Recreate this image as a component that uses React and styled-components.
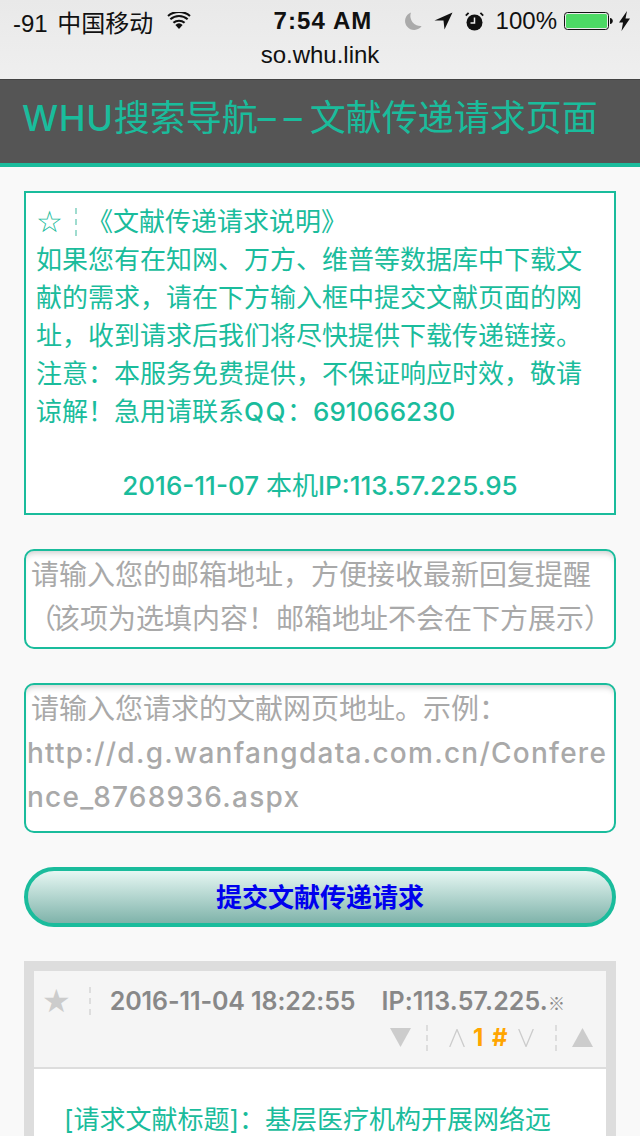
import React from "react";
import styled, { createGlobalStyle } from "styled-components";

const TEAL = "#1abc9c";
const CJK = '"Noto Sans CJK SC", sans-serif';
const LATIN = `Inter, ${CJK}`;

const GlobalStyle = createGlobalStyle`
  html, body {
    margin: 0;
    padding: 0;
    background: #f9f9f9;
  }
  * {
    box-sizing: border-box;
  }
`;

const Page = styled.div`
  width: 640px;
  height: 1136px;
  overflow: hidden;
  font-family: ${LATIN};
`;

const StatusArea = styled.div`
  height: 79px;
  background: linear-gradient(#e9e9e9, #efefef);
  font-family: "Liberation Sans", ${CJK};
  color: #111;
`;

const StatusBar = styled.div`
  height: 42px;
  display: grid;
  grid-template-columns: 1fr auto 1fr;
  align-items: center;
  padding: 0 10px 0 13px;
  font-size: 24px;
`;

const StatusLeft = styled.div`
  display: flex;
  align-items: center;
  gap: 14px;
  word-spacing: 3px;
`;

const Time = styled.div`
  margin-left: 3px;
  font-weight: 700;
  font-size: 24px;
  letter-spacing: 1.1px;
`;

const StatusRight = styled.div`
  display: flex;
  align-items: center;
  justify-content: flex-end;
  gap: 12px;
`;

const Percent = styled.span`
  margin: 0 -5px 0 0;
`;

const BatteryWrap = styled.span`
  display: flex;
  margin-right: -6px;
`;

const Domain = styled.div`
  text-align: center;
  font-size: 24px;
  line-height: 26px;
`;

const Header = styled.header`
  height: 88px;
  background: #555;
  border-top: 1px solid #444;
  border-bottom: 4px solid ${TEAL};
  padding: 16px 0 0 22px;
  color: ${TEAL};
  font-size: 36px;
  line-height: 44px;
  white-space: nowrap;
`;

const Latin = styled.span`
  font-weight: 500;
  letter-spacing: ${(p) => p.$spacing || 0}px;
`;

const Dashes = styled.span`
  letter-spacing: 8px;
`;

const Main = styled.main`
  padding: 24px 24px 0;
  display: flex;
  flex-direction: column;
  gap: 34px;
`;

const Notice = styled.section`
  height: 324px;
  background: #fff;
  border: 2px solid ${TEAL};
  padding: 10px;
  color: ${TEAL};
  font-size: 26px;
  line-height: 38px;
`;

const NoticeTitle = styled.div`
  display: flex;
  align-items: center;
`;

const Divider = styled.span`
  display: inline-block;
  flex: none;
  height: ${(p) => p.$height}px;
  margin: ${(p) => p.$margin};
  border-left: 2px dashed ${(p) => p.$color};
`;

const NoticeDate = styled.div`
  margin-top: 36px;
  text-align: center;
  font-weight: 500;
`;

const Thin = styled.span`
  font-weight: 400;
`;

const FieldWrap = styled.div`
  position: relative;
  height: ${(p) => p.$height}px;
`;

const Field = styled.textarea`
  display: block;
  width: 100%;
  height: 100%;
  resize: none;
  background: #fff;
  border: 2px solid ${TEAL};
  border-radius: 10px;
  box-shadow: inset 0 6px 6px -4px rgba(0, 0, 0, 0.2);
  overflow: hidden;
  outline: none;
`;

const Hint = styled.div`
  position: absolute;
  inset: 0;
  padding: 4px 2px 0 7px;
  pointer-events: none;
  color: #a9a9a9;
  font-size: 28px;
  line-height: 44px;
  white-space: nowrap;
`;

const HintLatin = styled.span`
  margin-left: -4px;
  font-weight: 500;
  letter-spacing: 1.25px;
`;

const OpenParen = styled.span`
  margin-left: -3px;
  letter-spacing: -4px;
`;

const SubmitButton = styled.button`
  height: 60px;
  width: 100%;
  border: 4px solid ${TEAL};
  border-radius: 30px;
  background: linear-gradient(#e6f7f3, #7fb3aa);
  color: #0000ee;
  font-family: ${CJK};
  font-size: 26px;
  font-weight: 700;
  padding: 0 0 4px;
`;

const Comment = styled.article`
  background: #ddd;
  padding: 10px 10px 0;
  height: 300px;
`;

const CommentHead = styled.div`
  height: 98px;
  background: #f5f5f5;
  border-bottom: 2px solid #ddd;
  padding: 0 13px 0 8px;
`;

const MetaRow = styled.div`
  height: 56px;
  padding-top: 4px;
  display: flex;
  align-items: center;
  color: #888;
  font-size: 25px;
  font-weight: 600;
  white-space: nowrap;
`;

const MetaDate = styled.span`
  letter-spacing: -0.1px;
`;

const IpLabel = styled.span`
  margin-left: 26px;
  letter-spacing: 0.15px;
`;

const Masked = styled.span`
  font-family: ${CJK};
  font-weight: 500;
  font-size: 17px;
`;

const VoteRow = styled.div`
  display: flex;
  align-items: center;
  justify-content: flex-end;
  height: 21px;
`;

const Star = styled.span`
  font-family: "DejaVu Sans", sans-serif;
  color: #ccc;
  font-size: 32px;
  line-height: 1;
`;

const Floor = styled.span`
  color: #ffa500;
  margin: 0 9px 0 8px;
  font-size: 24px;
  font-weight: 700;
  letter-spacing: 1.5px;
`;

const CommentBody = styled.div`
  background: #fff;
  height: 200px;
  padding: 32px 30px;
  color: ${TEAL};
  font-size: 26px;
  line-height: 38px;
`;

const Wifi = () => (
  <svg width="24" height="18" viewBox="0 0 26 20">
    <path d="M13 19l-4-4.6a6 6 0 0 1 8 0z" fill="#111" />
    <path d="M6.8 12a9.5 9.5 0 0 1 12.4 0M3.4 8a14.6 14.6 0 0 1 19.2 0M.8 4.4a19 19 0 0 1 24.4 0" fill="none" stroke="#111" strokeWidth="2.4" />
  </svg>
);

const Moon = () => (
  <svg width="19" height="19" viewBox="0 0 19 19">
    <path d="M8 .5a9 9 0 1 0 10.6 13.4A10 10 0 0 1 8 .5z" fill="#aaa" />
  </svg>
);

const Arrow = () => (
  <svg width="19" height="18" viewBox="0 0 19 18">
    <path d="M18.5 .5L.5 8.5h9l1 9z" fill="#111" />
  </svg>
);

const Alarm = () => (
  <svg width="19" height="19" viewBox="0 0 19 19">
    <circle cx="9.5" cy="10.5" r="8" fill="#111" />
    <path d="M9.5 5.5v5.5H5.5" fill="none" stroke="#eee" strokeWidth="1.5" />
    <path d="M.8 3.6L3.6.8M18.2 3.6L15.4.8" stroke="#111" strokeWidth="1.8" />
  </svg>
);

const Battery = () => (
  <svg width="49" height="18" viewBox="0 0 49 18">
    <rect x="0.5" y="0.5" width="44" height="17" rx="3" fill="none" stroke="#111" />
    <rect x="2" y="2" width="41" height="14" rx="1.5" fill="#4cd964" />
    <path d="M46 6c1.8.3 2.8 1.4 2.8 3s-1 2.7-2.8 3z" fill="#111" />
  </svg>
);

const Bolt = () => (
  <svg width="11" height="20" viewBox="0 0 11 20">
    <path d="M8 0L0 11.5h4L2.5 20 11 7.5H6.5z" fill="#111" />
  </svg>
);

const Triangle = ({ down }) => (
  <svg width="21" height="19" viewBox="0 0 21 19">
    <path d={down ? "M0 0h21L10.5 19z" : "M10.5 0L21 19H0z"} fill="#ccc" />
  </svg>
);

const Caret = ({ down }) => (
  <svg width="16" height="18" viewBox="0 0 16 18">
    <path d={down ? "M.7 0L8 17.5 15.3 0" : "M.7 18L8 .5 15.3 18"} fill="none" stroke="#ccc" strokeWidth="1.3" />
  </svg>
);

const StarOutline = styled.span`
  font-family: "DejaVu Sans", sans-serif;
  font-size: 30px;
`;

export default function App() {
  return (
    <Page>
      <GlobalStyle />
      <StatusArea>
        <StatusBar>
          <StatusLeft>
            <span>-91 中国移动</span>
            <Wifi />
          </StatusLeft>
          <Time>7:54 AM</Time>
          <StatusRight>
            <Moon />
            <Arrow />
            <Alarm />
            <Percent>100%</Percent>
            <BatteryWrap><Battery /></BatteryWrap>
            <Bolt />
          </StatusRight>
        </StatusBar>
        <Domain>so.whu.link</Domain>
      </StatusArea>
      <Header>
        <Latin $spacing={0.7}>WHU</Latin>搜索导航<Dashes>––</Dashes>文献传递请求页面
      </Header>
      <Main>
        <Notice>
          <NoticeTitle>
            <StarOutline>☆</StarOutline>
            <Divider $height={28} $margin="0 10px 0 12px" $color="#9fdccf" />
            《文献传递请求说明》
          </NoticeTitle>
          <div>如果您有在知网、万方、维普等数据库中下载文献的需求，请在下方输入框中提交文献页面的网址，收到请求后我们将尽快提供下载传递链接。注意：本服务免费提供，不保证响应时效，敬请</div>
          <div>谅解！急用请联系<Latin $spacing={1.5}>QQ</Latin>：<Latin>691066230</Latin></div>
          <NoticeDate>2016-11-07 <Thin>本机</Thin>IP:113.57.225.95</NoticeDate>
        </Notice>
        <FieldWrap $height={100}>
          <Field />
          <Hint>
            <div>请输入您的邮箱地址，方便接收最新回复提醒</div>
            <div><OpenParen>（</OpenParen>该项为选填内容！邮箱地址不会在下方展示）</div>
          </Hint>
        </FieldWrap>
        <FieldWrap $height={150}>
          <Field />
          <Hint>
            <div>请输入您请求的文献网页地址。示例：</div>
            <div><HintLatin>http://d.g.wanfangdata.com.cn/Confere</HintLatin></div>
            <div><HintLatin>nce_8768936.aspx</HintLatin></div>
          </Hint>
        </FieldWrap>
        <SubmitButton type="button">提交文献传递请求</SubmitButton>
        <Comment>
          <CommentHead>
            <MetaRow>
              <Star>★</Star>
              <Divider $height={28} $margin="0 19px 0 18px" $color="#ddd" />
              <MetaDate>2016-11-04 18:22:55</MetaDate>
              <IpLabel>IP:113.57.225.<Masked>※</Masked></IpLabel>
            </MetaRow>
            <VoteRow>
              <Triangle down />
              <Divider $height={26} $margin="0 21px 0 15px" $color="#ddd" />
              <Caret />
              <Floor>1 #</Floor>
              <Caret down />
              <Divider $height={26} $margin="0 15px 0 21px" $color="#ddd" />
              <Triangle />
            </VoteRow>
          </CommentHead>
          <CommentBody>[请求文献标题]：基层医疗机构开展网络远</CommentBody>
        </Comment>
      </Main>
    </Page>
  );
}
